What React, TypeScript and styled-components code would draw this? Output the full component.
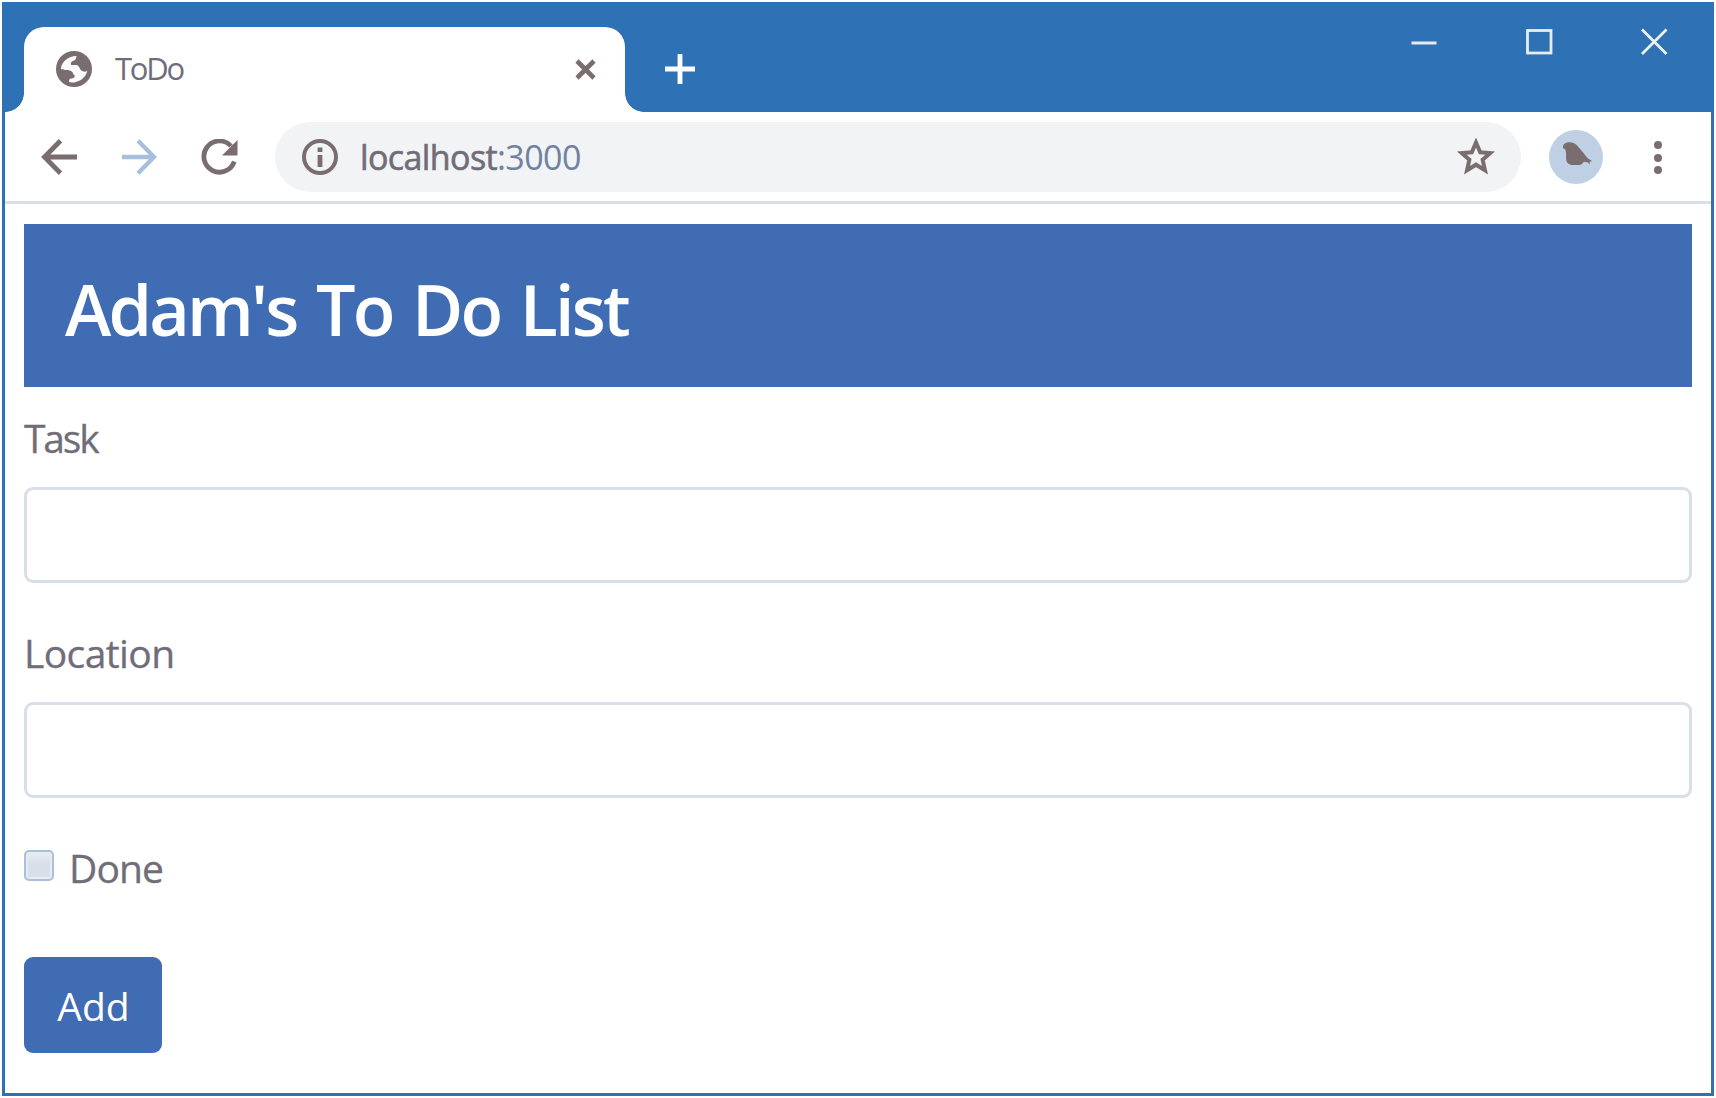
import React from "react";
import styled, { createGlobalStyle, css } from "styled-components";

const blue = "#2e71b5";
const primary = "#406cb3";
const ink = "#7a6d70";
const text = "#706d79";
const line = "#d8dfe8";

const GlobalStyle = createGlobalStyle`
  *, *::before, *::after { box-sizing: border-box; }
  body {
    margin: 0;
    background: #fff;
    font-family: "Open Sans", "Noto Sans", sans-serif;
    color: ${text};
    overflow: hidden;
  }
`;

const Desktop = styled.div`
  width: 1716px;
  height: 1098px;
  padding: 2px;
  background: #fff;
`;

const Window = styled.div`
  display: flex;
  flex-direction: column;
  height: 1094px;
  border: 3px solid ${blue};
  background: #fff;
`;

const TitleBar = styled.header`
  display: flex;
  flex: none;
  height: 107px;
  padding-left: 19px;
  background: ${blue};
`;

const Tab = styled.div`
  position: relative;
  display: flex;
  align-items: center;
  width: 601px;
  height: 85px;
  margin-top: 22px;
  padding: 0 29px 1px 32px;
  background: #fff;
  border-radius: 20px 20px 0 0;

  &::before,
  &::after {
    content: "";
    position: absolute;
    bottom: 0;
    width: 19px;
    height: 19px;
  }
  &::before {
    left: -19px;
    background: radial-gradient(circle at 0 0, transparent 18.5px, #fff 19.2px);
  }
  &::after {
    right: -19px;
    background: radial-gradient(circle at 100% 0, transparent 18.5px, #fff 19.2px);
  }
`;

const TabTitle = styled.span`
  flex: 1;
  margin-left: 23px;
  padding-bottom: 3px;
  font-size: 31px;
  line-height: 42px;
  letter-spacing: -2.2px;
`;

const NewTab = styled.button`
  display: flex;
  align-items: center;
  justify-content: center;
  width: 50px;
  height: 50px;
  margin: 39px 0 0 30px;
  padding: 0;
  border: 0;
  background: none;
`;

const WindowControls = styled.div`
  display: flex;
  gap: 87px;
  margin: 22px 43px 0 auto;
`;

const Icon = styled.svg`
  display: block;
  flex: none;
`;

const Toolbar = styled.nav`
  display: flex;
  flex: none;
  align-items: center;
  height: 92px;
  padding: 0 32px 0 36px;
  border-bottom: 3px solid ${line};
`;

const NavButtons = styled.div`
  display: flex;
  gap: 40px;
`;

const AddressBar = styled.div`
  display: flex;
  align-items: center;
  width: 1246px;
  height: 70px;
  margin-left: 34px;
  padding: 0 25px 0 26px;
  border-radius: 35px;
  background: #f2f3f5;
`;

const Url = styled.span`
  flex: 1;
  margin-left: 21px;
  font-size: 34px;
  line-height: 46px;
  letter-spacing: -0.6px;
`;

const Host = styled.span`
  -webkit-text-stroke: 0.6px ${text};
`;

const Port = styled.span`
  color: #7082a0;
`;

const Avatar = styled.div`
  display: flex;
  align-items: center;
  justify-content: center;
  width: 54px;
  height: 54px;
  margin-left: 28px;
  padding: 0 0 5px 2px;
  border-radius: 50%;
  background: #bfd0e4;
`;

const Menu = styled.div`
  display: flex;
  flex-direction: column;
  gap: 4.5px;
  margin: 2px 0 0 51px;
`;

const Dot = styled.i`
  width: 8px;
  height: 8px;
  border-radius: 50%;
  background: ${ink};
`;

const Page = styled.main`
  display: flex;
  flex-direction: column;
  align-items: stretch;
  padding: 20px 19px 0 19px;
`;

const Banner = styled.h1`
  height: 163px;
  margin: 0;
  padding: 25px 41px 0;
  background: ${primary};
  color: #fff;
  font-size: 70px;
  font-weight: 600;
  line-height: 120px;
  letter-spacing: -2.8px;
  word-spacing: 4px;
`;

const labelText = css`
  font-size: 39px;
  line-height: 52px;
`;

const Field = styled.div<{ $top: number }>`
  display: flex;
  flex-direction: column;
  margin-top: ${(p) => p.$top}px;
`;

const Label = styled.label<{ $spacing: number }>`
  ${labelText}
  letter-spacing: ${(p) => p.$spacing}px;
  -webkit-text-stroke: 0.3px ${text};
`;

const Input = styled.input`
  width: 100%;
  height: 96px;
  margin-top: 23px;
  padding: 0 24px;
  border: 3px solid ${line};
  border-radius: 9px;
  outline: none;
  background: #fff;
  font: inherit;
  font-size: 39px;
`;

const CheckRow = styled.label`
  display: flex;
  align-items: center;
  gap: 15px;
  height: 52px;
  margin-top: 44px;
  ${labelText}
  letter-spacing: -0.9px;
  -webkit-text-stroke: 0.3px ${text};
`;

const Checkbox = styled.input`
  appearance: none;
  width: 30px;
  height: 31px;
  margin: -5px 0 0;
  border: 2px solid #a9c1dc;
  border-radius: 5px;
  background: linear-gradient(#e9edf2, #d8dfe8 45%);
  box-shadow: inset 0 0 0 2px #e6ebf1;
`;

const AddButton = styled.button`
  align-self: flex-start;
  width: 138px;
  height: 96px;
  margin-top: 63px;
  padding: 2px 0 0 1px;
  border: 0;
  border-radius: 9px;
  background: ${primary};
  color: #fff;
  font: inherit;
  ${labelText}
`;

export default function App() {
  return (
    <Desktop>
      <GlobalStyle />
      <Window>
        <TitleBar>
          <Tab>
            <Icon width="36" height="36" viewBox="0 0 36 36">
              <circle cx="18" cy="18" r="18" fill={ink} />
              <path
                d="M20.500 5C16 5 12 6.500 8.500 10 6 12.500 5 15.500 5 18c2 1.200 4.500.8 7 1 3 .3 4.500 1.500 5.500 4.500 1 .3 1.500 1 1.200 2-.5 1.500-2.200 2-5.200 2.500l-.5 3c2 .5 4 .7 6 .2C25 30 30 26 31.300 19.500c-1.800 1.500-3.300 1.500-5 .5-2-1-2.500-2.500-3.300-4-.8-1.500-1.800-2-3.300-2h-4.700c-.5-2.500.5-4 2.500-4.300 1.500-.2 2.700-1.700 3-4.700z"
                fill="#fff"
              />
            </Icon>
            <TabTitle>ToDo</TabTitle>
            <Icon width="21" height="21" viewBox="0 0 21 21">
              <path d="M2 2l17 17M19 2L2 19" stroke={ink} strokeWidth="4.600" />
            </Icon>
          </Tab>
          <NewTab aria-label="New tab">
            <Icon width="30" height="30" viewBox="0 0 30 30">
              <path d="M15 0v30M0 15h30" stroke="#fff" strokeWidth="4.800" />
            </Icon>
          </NewTab>
          <WindowControls>
            <Icon width="28" height="30" viewBox="0 0 28 30">
              <path d="M1.500 16h25" stroke="#e6ebf2" strokeWidth="3" />
            </Icon>
            <Icon width="28" height="30" viewBox="0 0 28 30">
              <rect x="2.500" y="3.500" width="23.500" height="22.500" fill="none" stroke="#e9edf3" strokeWidth="2.800" />
            </Icon>
            <Icon width="28" height="30" viewBox="0 0 28 30">
              <path d="M2 2.500l24.500 24.500M26.500 2.500L2 27" stroke="#edf0f5" strokeWidth="2.800" />
            </Icon>
          </WindowControls>
        </TitleBar>

        <Toolbar>
          <NavButtons>
            <Icon width="40" height="36" viewBox="0 0 40 36">
              <path d="M36 18H4M19.500 1.800L3.500 18l16 16.200" fill="none" stroke={ink} strokeWidth="4.800" />
            </Icon>
            <Icon width="36" height="36" viewBox="0 0 36 36">
              <path d="M1 18h32M17 1.800L33 18 17 34.200" fill="none" stroke="#a6bfda" strokeWidth="4.400" />
            </Icon>
            <Icon width="44" height="36" viewBox="0 0 44 36">
              <path d="M37.300 22.500A15.600 15.600 0 1 1 34 7" fill="none" stroke={ink} strokeWidth="4.800" />
              <path d="M40.500 1v15.500H25z" fill={ink} />
            </Icon>
          </NavButtons>
          <AddressBar>
            <Icon width="38" height="38" viewBox="0 0 38 38">
              <circle cx="19" cy="19" r="16" fill="none" stroke={ink} strokeWidth="4" />
              <path d="M19 17v12M19 9.500v4.500" stroke={ink} strokeWidth="4.800" />
            </Icon>
            <Url>
              <Host>localhost</Host>
              <Port>:3000</Port>
            </Url>
            <Icon width="40" height="38" viewBox="0 0 40 38">
              <path
                d="M20 4.500l4.200 9.800 10 .8-7.600 6.700 2.400 10.400-9-5.500-9 5.500 2.400-10.400-7.600-6.700 10-.8z"
                fill="none"
                stroke={ink}
                strokeWidth="4"
              />
            </Icon>
          </AddressBar>
          <Avatar>
            <Icon width="29" height="24" viewBox="0 0 29 24">
              <path
                d="M0 4.500C0 2 3 .2 6.500.2c4 0 6.500 1.800 8.500 4.300l6 7c1.500 2 2.500 3.800 4 5l4 2.500-2.500 1 .5 2.500-2.500-2.300-3.500-.5c-1.500 1.500-2.500 3.100-5 3.300H9c-3.500-.5-6-3-6-6.500.2-3.500.3-6.500-.8-9L0 6z"
                fill={ink}
              />
            </Icon>
          </Avatar>
          <Menu>
            <Dot />
            <Dot />
            <Dot />
          </Menu>
        </Toolbar>

        <Page>
          <Banner>Adam's To Do List</Banner>
          <Field $top={25}>
            <Label htmlFor="task" $spacing={-2.2}>Task</Label>
            <Input id="task" />
          </Field>
          <Field $top={44}>
            <Label htmlFor="location" $spacing={-0.6}>Location</Label>
            <Input id="location" />
          </Field>
          <CheckRow>
            <Checkbox type="checkbox" />
            Done
          </CheckRow>
          <AddButton>Add</AddButton>
        </Page>
      </Window>
    </Desktop>
  );
}
